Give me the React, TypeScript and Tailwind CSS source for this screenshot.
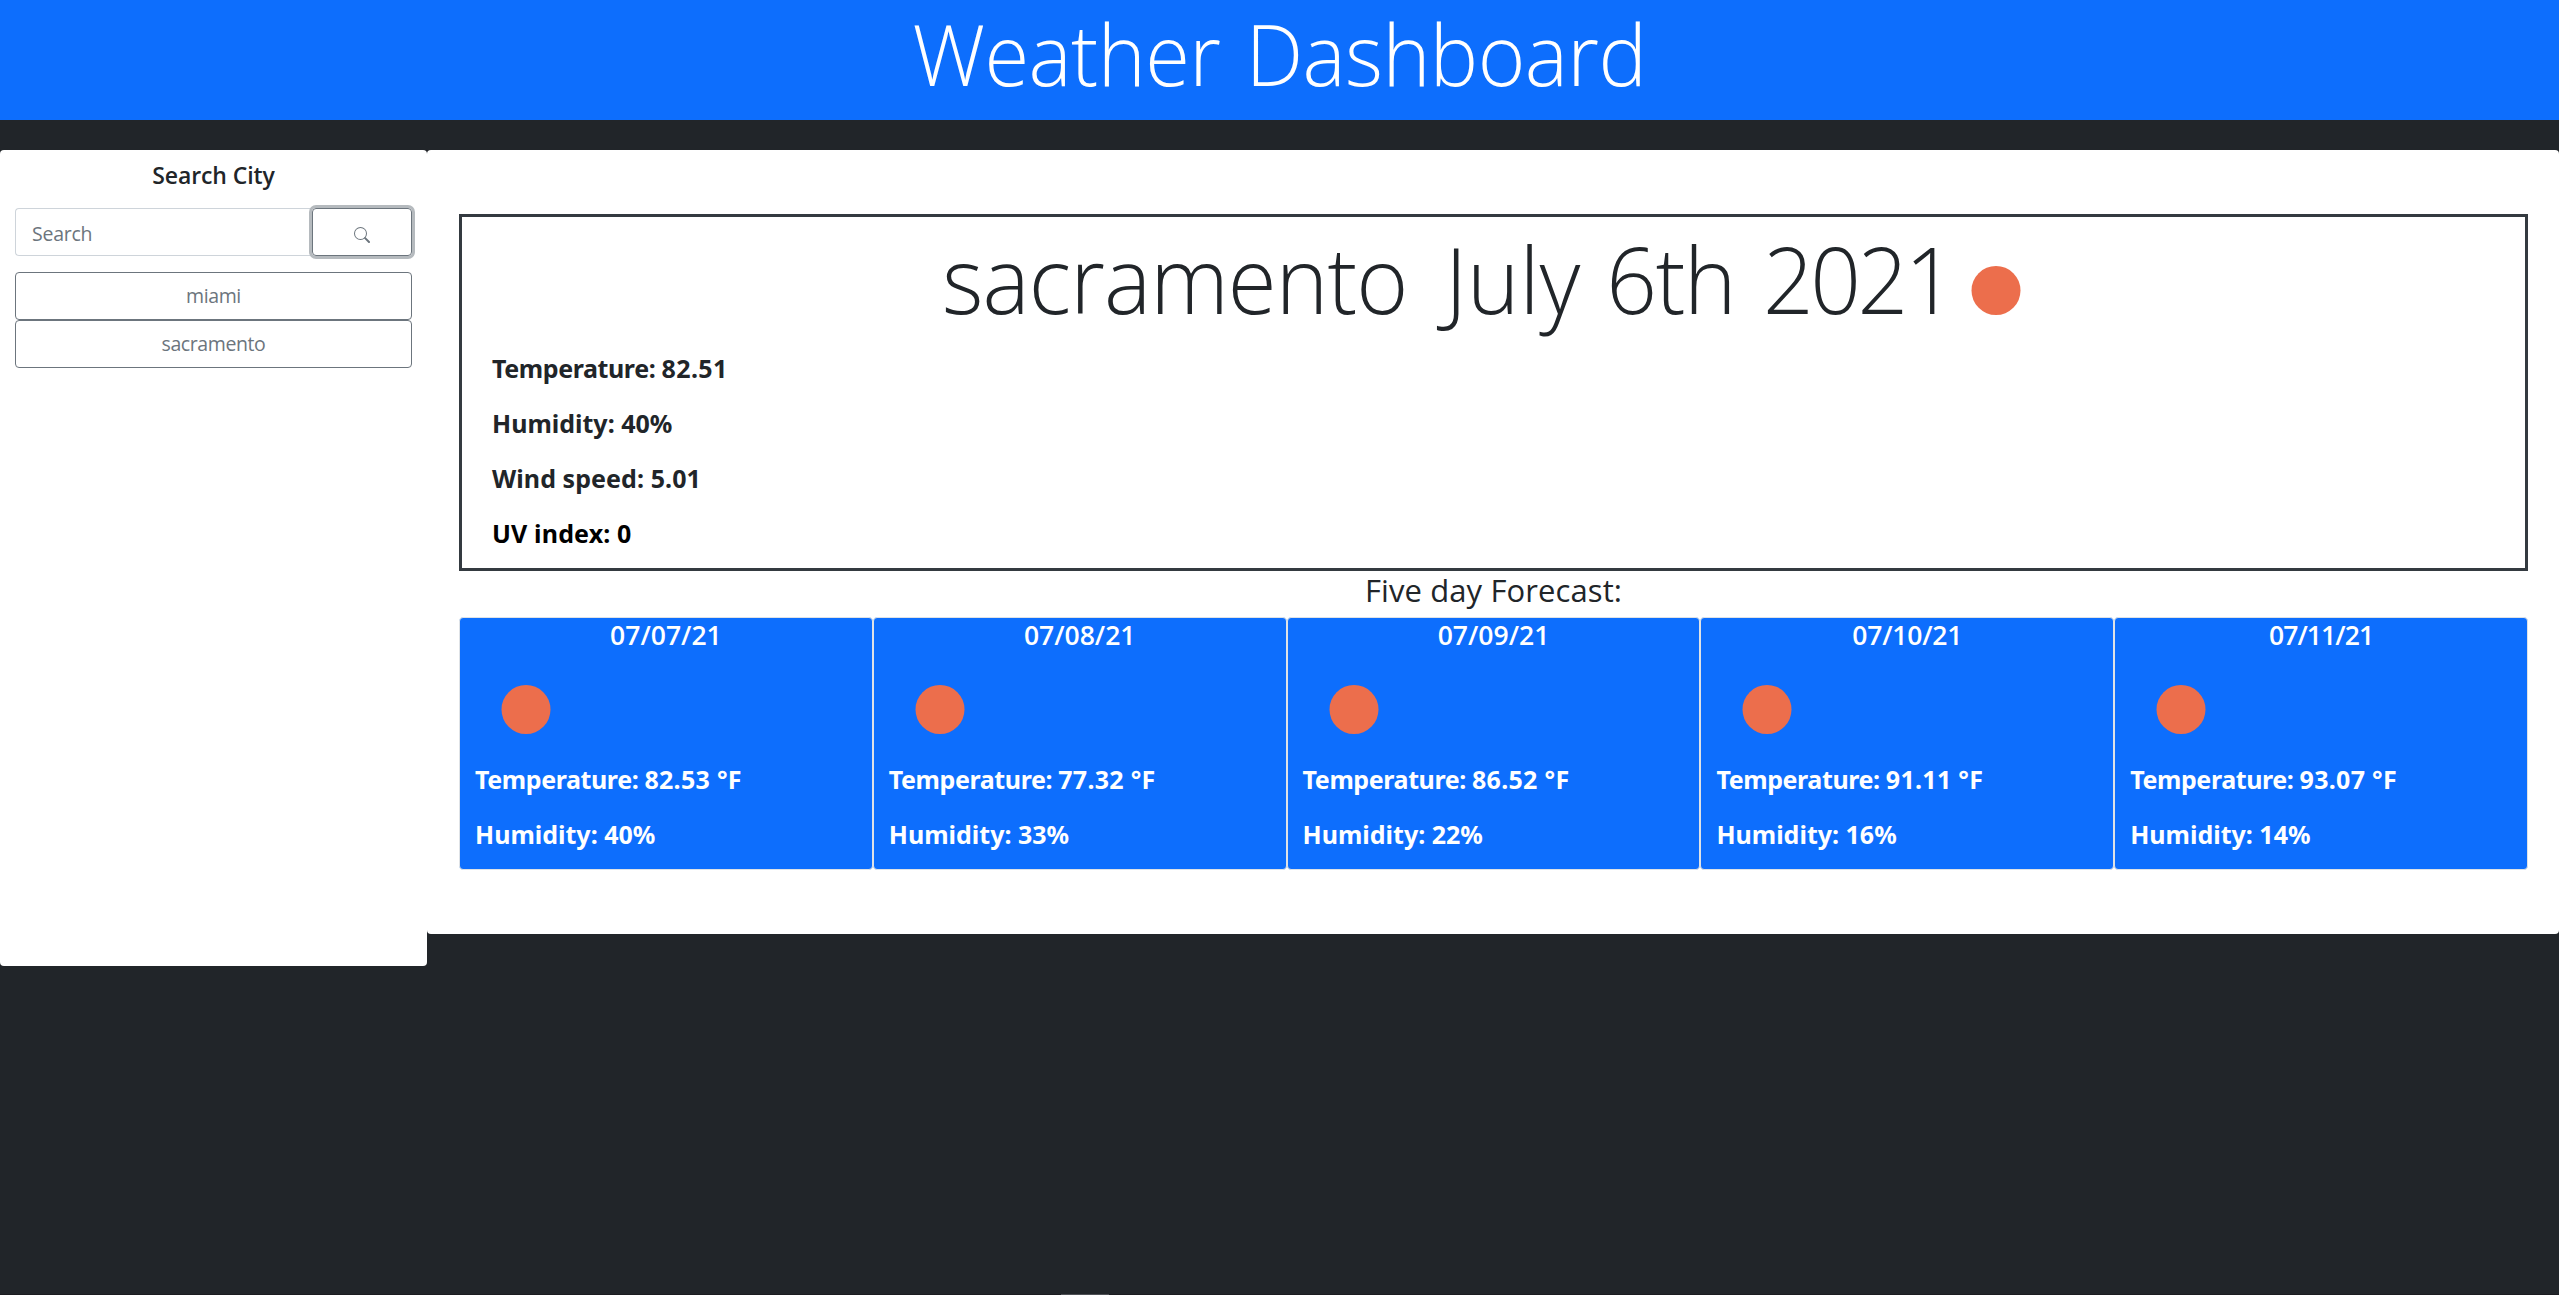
type Day = { date: string; temp: string; humidity: string; dateClass: string };

const DAYS: Day[] = [
  { date: "07/07/21", temp: "82.53", humidity: "40", dateClass: "tracking-normal" },
  { date: "07/08/21", temp: "77.32", humidity: "33", dateClass: "tracking-normal" },
  { date: "07/09/21", temp: "86.52", humidity: "22", dateClass: "tracking-normal" },
  { date: "07/10/21", temp: "91.11", humidity: "16", dateClass: "tracking-[-0.2px]" },
  { date: "07/11/21", temp: "93.07", humidity: "14", dateClass: "tracking-[-0.9px]" },
];

const CITIES = ["miami", "sacramento"];

function Sun({ cy }: { cy: number }) {
  return (
    <svg width="100" height="100" viewBox="0 0 100 100" className="block shrink-0" aria-hidden="true">
      <circle cx="50" cy={cy} r="24.5" fill="#ec6e4c" />
    </svg>
  );
}

function SearchIcon() {
  return (
    <svg width="16" height="16" viewBox="0 0 16 16" fill="currentColor" aria-hidden="true">
      <path
        fillRule="evenodd"
        d="M10.442 10.442a1 1 0 0 1 1.415 0l3.85 3.85a1 1 0 0 1-1.414 1.415l-3.85-3.85a1 1 0 0 1 0-1.415z"
      />
      <path
        fillRule="evenodd"
        d="M6.5 12a5.5 5.5 0 1 0 0-11 5.5 5.5 0 0 0 0 11zM13 6.5a6.5 6.5 0 1 1-13 0 6.5 6.5 0 0 1 13 0z"
      />
    </svg>
  );
}

function SearchPanel() {
  return (
    <aside className="h-[816px] w-[427px] shrink-0 rounded bg-white pr-[15px] pl-[15px] pt-[7px]">
      <h5 className="text-center text-[23px] leading-9 font-semibold tracking-[-0.1px]">Search City</h5>
      <div className="mt-[15px] flex h-12">
        <input
          type="text"
          placeholder="Search"
          className="h-12 w-[298px] rounded-l border border-r-0 border-[#ced4da] bg-white px-4 pt-[3px] text-[19.5px] tracking-[-0.25px] text-[#212529] placeholder:text-[#6c757d]"
        />
        <button
          aria-label="Search"
          className="ml-[-1px] flex h-12 w-[100px] items-center justify-center rounded border border-[#6c757d] pt-[6px] text-[#6c757d] shadow-[0_0_0_3px_#b5babe]"
        >
          <SearchIcon />
        </button>
      </div>
      <div className="mt-4 flex flex-col">
        {CITIES.map((city) => (
          <button
            key={city}
            className="h-12 w-full rounded border border-[#6c757d] text-center text-[19.5px] tracking-[-0.4px] text-[#6c757d]"
          >
            {city}
          </button>
        ))}
      </div>
    </aside>
  );
}

function CurrentWeather() {
  return (
    <section className="border-[3px] border-[#343a40] pt-0.5 pb-[7px]">
      <h1 className="flex h-[118px] items-center justify-center text-[93px] leading-[118px] font-light">
        <span className="w-[1004px]">
          <span className="inline-block origin-left scale-x-[0.956] whitespace-nowrap">
            <span className="tracking-[-0.9px]">sacramento</span> <span className="ml-[15px]">July</span>{" "}
            <span className="ml-[3px] tracking-[-1.5px]">6th</span>{" "}
            <span className="ml-[5px] tracking-[-3.6px]">2021</span>
          </span>
        </span>
        <Sun cy={62.5} />
      </h1>
      <div className="mt-1 pl-[30px] font-['Noto_Sans',sans-serif] text-[25px] leading-[55px] font-bold">
        <p className="tracking-[-0.4px]">
          Temperature: <span className="tracking-[0.45px]">82.51</span>
        </p>
        <p>Humidity: 40%</p>
        <p className="tracking-[0.08px]">Wind speed: 5.01</p>
        <p className="tracking-[0.15px] text-black">UV index: 0</p>
      </div>
    </section>
  );
}

function ForecastCard({ day }: { day: Day }) {
  return (
    <article className="flex-1 rounded border border-[#dee2e6] bg-[#0d6efd] pb-[7px] text-white">
      <h3 className="text-center text-[26.5px] leading-[34px] font-semibold">
        <span className={day.dateClass}>{day.date}</span>
      </h3>
      <div className="pl-4">
        <Sun cy={57.5} />
      </div>
      <div className="pl-[15px] font-['Noto_Sans',sans-serif] text-[25px] leading-[55px] font-bold">
        <p className="tracking-[-0.4px]">
          Temperature: <span className="tracking-[0.3px]">{day.temp} °F</span>
        </p>
        <p>Humidity: {day.humidity}%</p>
      </div>
    </article>
  );
}

export default function App() {
  return (
    <div className="flex h-[1295px] flex-col bg-[#212529] font-['Open_Sans','Noto_Sans',sans-serif] text-[#212529]">
      <header className="flex h-[120px] shrink-0 justify-center bg-[#0d6efd] text-[85px] leading-[106px] font-light text-white">
        <h1 className="scale-x-[0.957] whitespace-nowrap tracking-[-0.6px] [word-spacing:5px]">Weather Dashboard</h1>
      </header>
      <main className="mt-[30px] flex items-start">
        <SearchPanel />
        <div className="h-[784px] flex-1 rounded bg-white pt-16 pr-[31px] pl-8">
          <CurrentWeather />
          <h2 className="h-[46px] text-center text-[31px] leading-[39px] font-medium tracking-[0.1px]">
            Five day Forecast:
          </h2>
          <div className="flex">
            {DAYS.map((day) => (
              <ForecastCard key={day.date} day={day} />
            ))}
          </div>
        </div>
      </main>
      <div className="mt-auto flex h-px bg-[#1b1c20]">
        <div className="ml-[1061px] w-12 bg-[#4e5055]" />
      </div>
    </div>
  );
}
